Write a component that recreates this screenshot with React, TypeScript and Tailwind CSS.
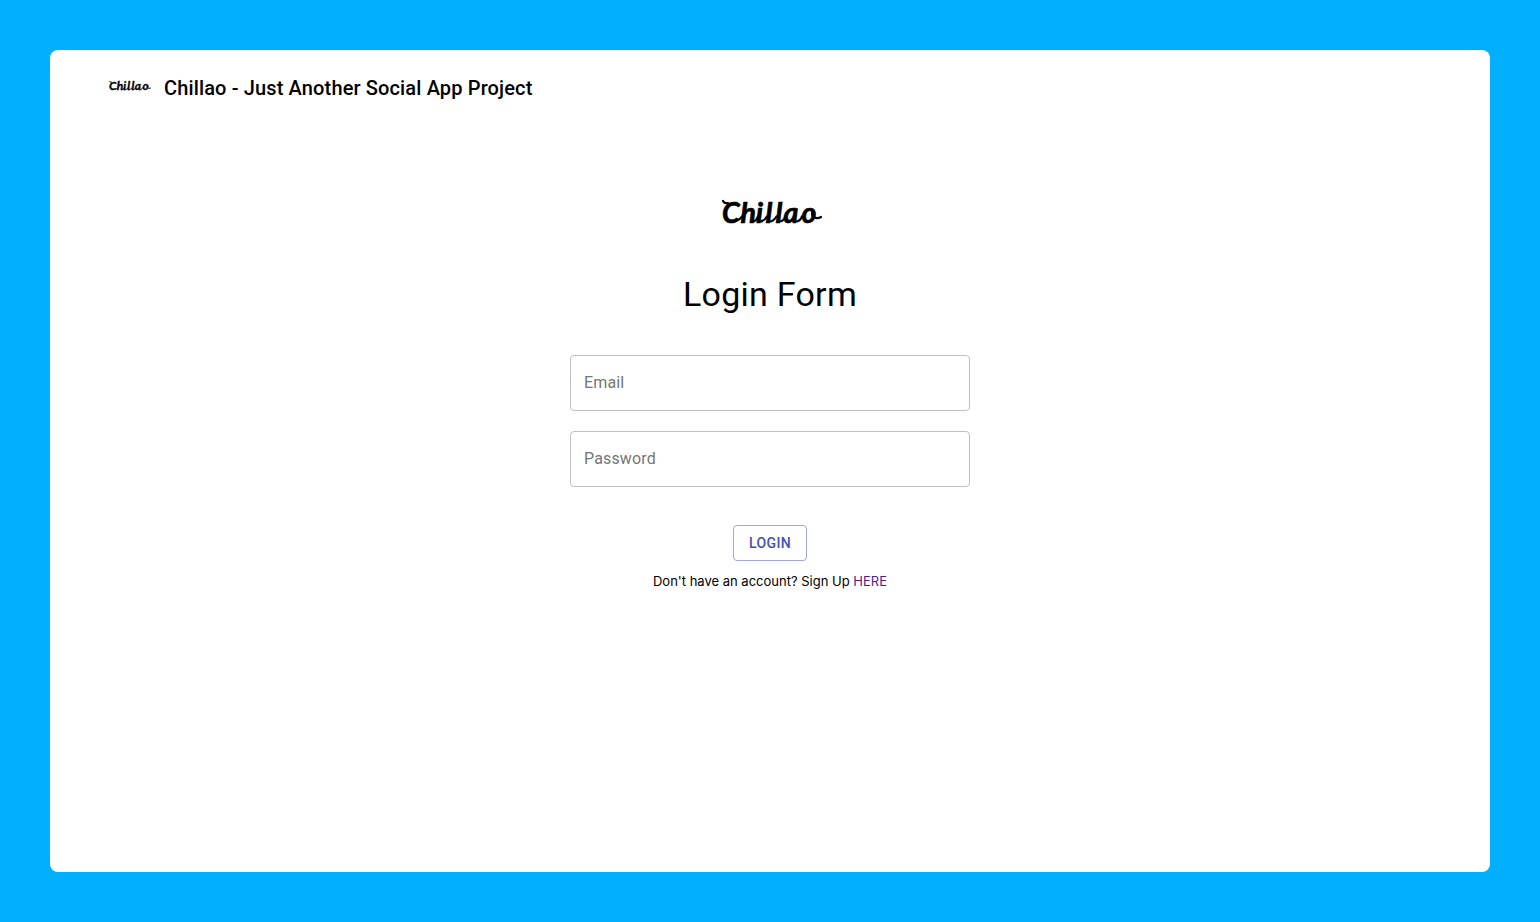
function Wordmark({ className }: { className: string }) {
  return (
    <svg viewBox="0 0 100 26" className={className} role="img" aria-label="Chillao" overflow="visible">
      <text
        x="0 18.5 34 43.5 53.5 61.5 79.5"
        y="24.5"
        fontSize="28.5"
        fill="#000"
        stroke="#000"
        strokeWidth="0.7"
        strokeLinejoin="round"
        fontFamily="Lato, sans-serif"
        fontStyle="italic"
        fontWeight="700"
      >
        Chillao
      </text>
      <g fill="none" stroke="#000" strokeWidth="2.2" strokeLinecap="round">
        <path d="M1 3c1 2 3 2.500 5 2" />
        <path d="M15 22.500q3-1 5-4" />
        <path d="M31 23.500q3 0 5-5" />
        <path d="M38 23.500q4 0 7-5" />
        <path d="M47.500 23.500q4 0 7-5" />
        <path d="M57 23.500q4 0 6-4" />
        <path d="M74 23.500q4 0 6-5" />
        <path d="M91 13c-3 5 3 9 8 6" />
      </g>
    </svg>
  );
}

function Field({ label, type }: { label: string; type: string }) {
  return (
    <input
      type={type}
      placeholder={label}
      aria-label={label}
      className="h-14 w-full rounded-[4px] border border-[#c0c0c0] bg-white px-[13px] pb-[2px] text-base tracking-[0.15px] outline-none placeholder:text-[#757575]"
    />
  );
}

export default function App() {
  return (
    <div className="flex min-h-screen bg-[#00b0ff] p-[50px] font-[Roboto,sans-serif] text-black">
      <main className="flex flex-1 flex-col rounded-lg bg-white">
        <header className="flex h-[76px] items-center pl-[59px]">
          <Wordmark className="mr-[13px] mb-[5px] h-[11px] w-[42px]" />
          <h1 className="text-xl font-medium tracking-[0.14px]">Chillao - Just Another Social App Project</h1>
        </header>
        <form className="mx-auto flex w-[400px] flex-col items-center pt-[72px]" onSubmit={(e) => e.preventDefault()}>
          <Wordmark className="ml-1 h-[26px] w-[100px]" />
          <h2 className="mt-[49px] text-[34px] leading-[42px] tracking-[0.25px]">Login Form</h2>
          <div className="mt-10 flex w-full flex-col gap-5">
            <Field label="Email" type="email" />
            <Field label="Password" type="password" />
          </div>
          <button className="mt-[38px] h-9 w-[74px] rounded-[4px] border border-[#9fa8da] text-sm font-medium tracking-[0.4px] text-[#3f51b5]">
            LOGIN
          </button>
          <p className="mt-[10px] font-[Inter,sans-serif] text-[13px] leading-5 whitespace-nowrap">
            Don't have an account? Sign Up <a href="#signup" className="text-[#551a8b]">HERE</a>
          </p>
        </form>
      </main>
    </div>
  );
}
